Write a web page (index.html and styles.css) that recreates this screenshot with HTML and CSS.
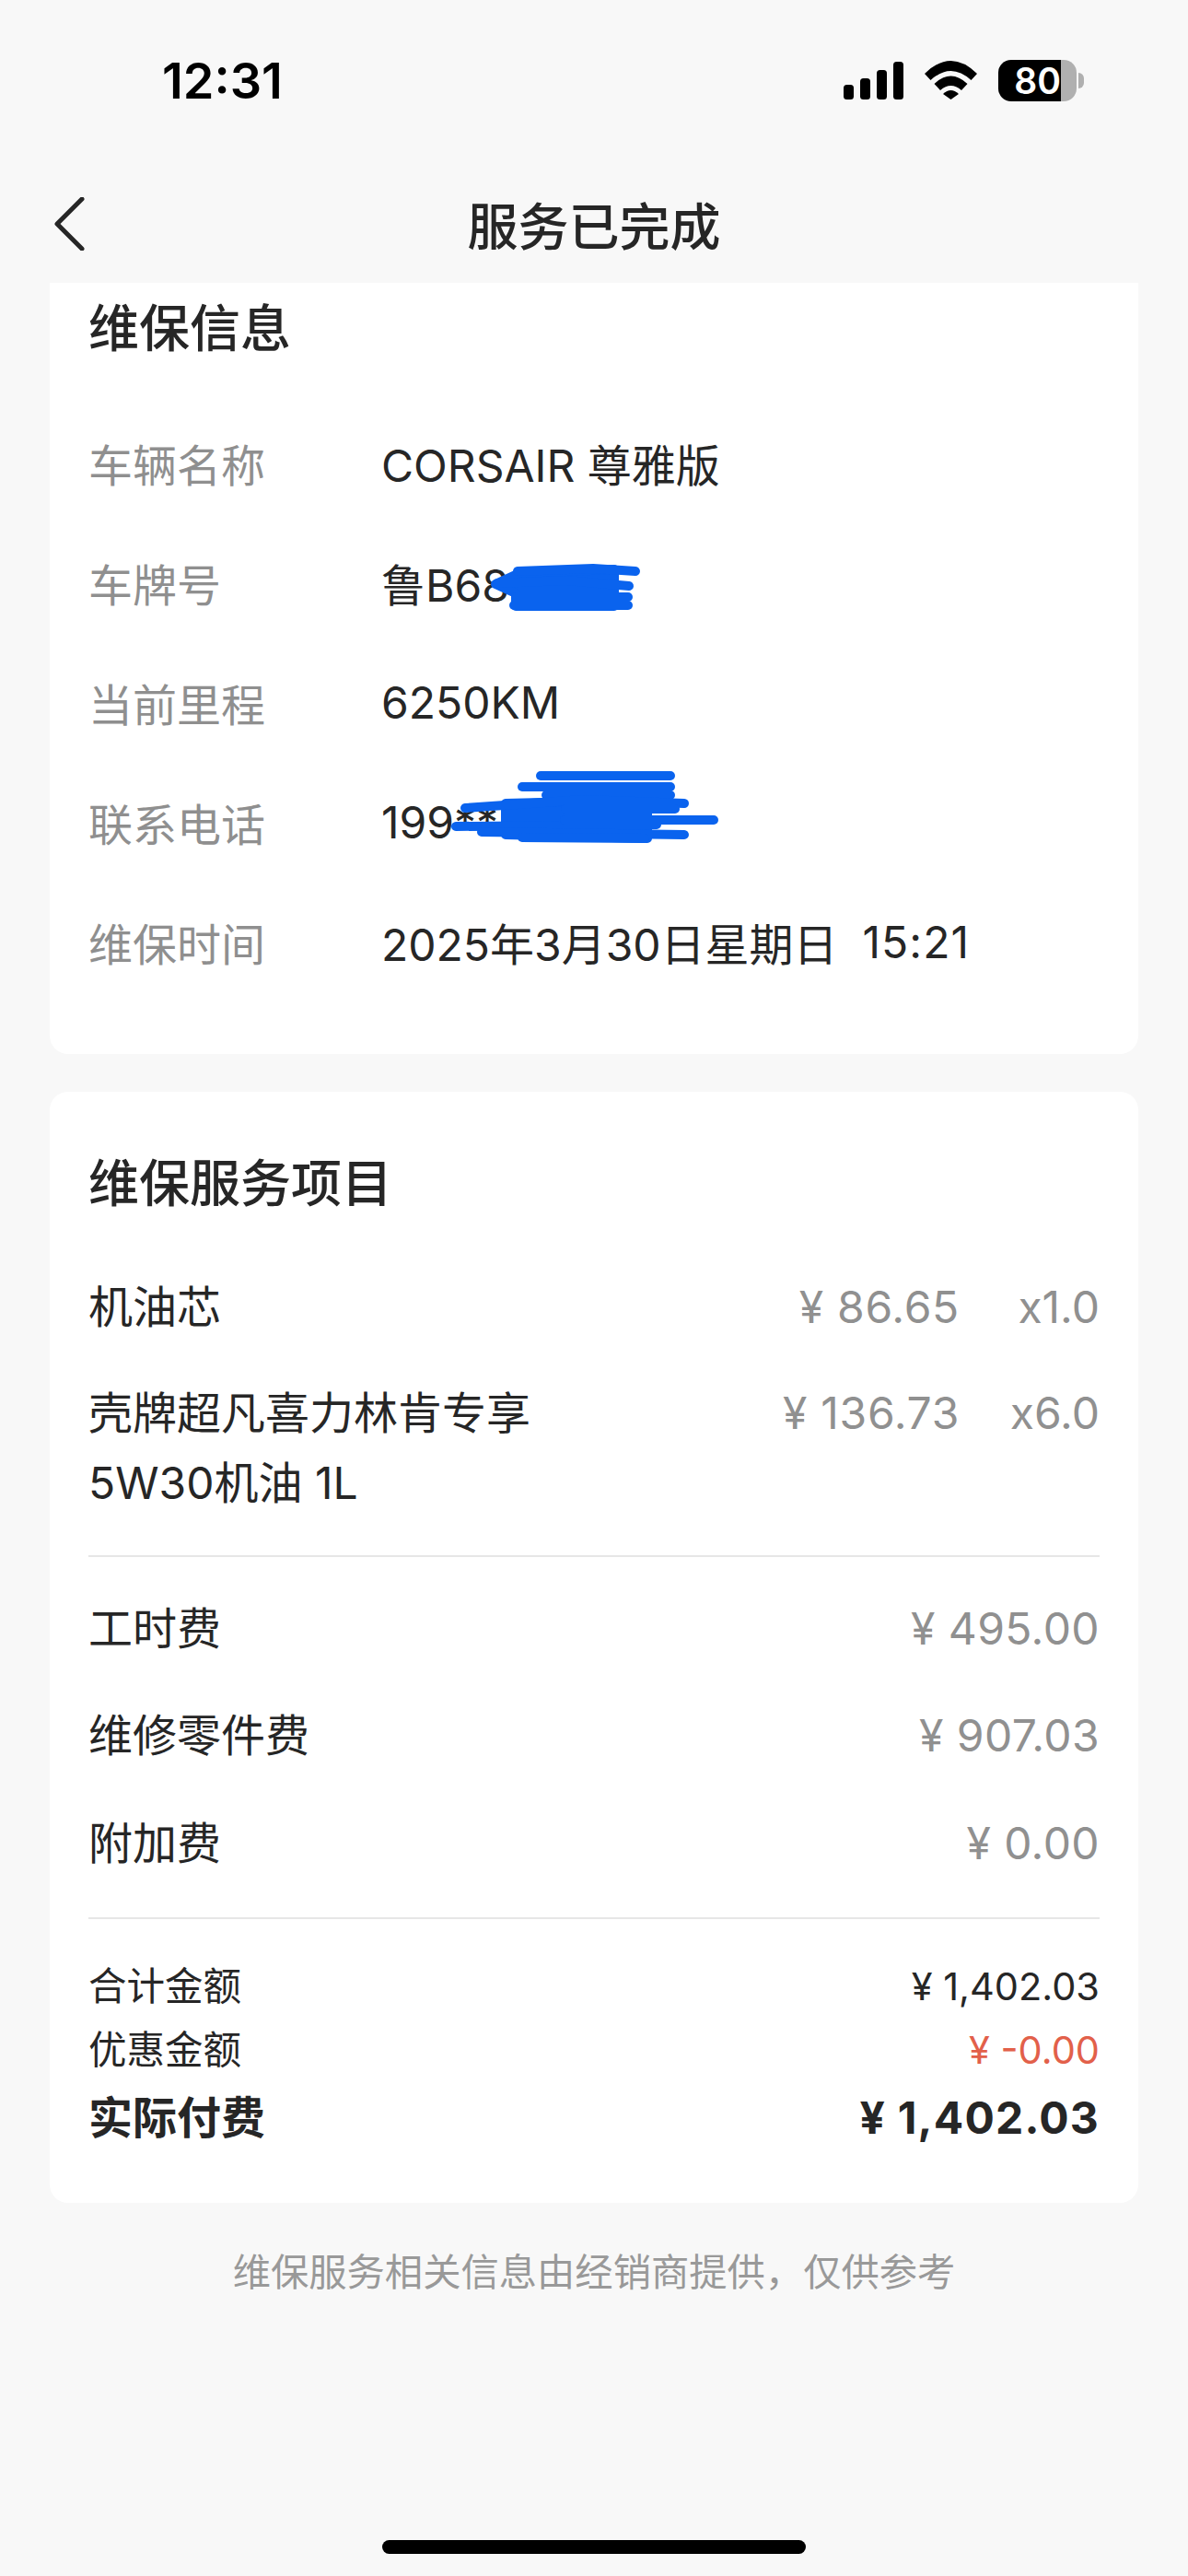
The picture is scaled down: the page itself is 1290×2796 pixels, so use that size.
FILE: index.html
```html
<!DOCTYPE html>
<html lang="zh-CN">
<head>
  <meta charset="UTF-8" />
  <meta name="viewport" content="width=device-width, initial-scale=1.0"/>
  <title>服务已完成</title>
  <link rel="stylesheet" href="styles.css">
</head>
<body>
  <div class="page">
    <div class="status-bar">
      <span class="time">12:31</span>
      <div class="status-icons">
        <svg class="signal" width="65" height="41" viewBox="0 0 65 41">
          <rect x="0" y="25" width="11" height="16" rx="3.5"/>
          <rect x="18" y="18" width="11" height="23" rx="3.5"/>
          <rect x="36" y="9" width="11" height="32" rx="3.5"/>
          <rect x="54" y="0" width="11" height="41" rx="3.5"/>
        </svg>
        <svg class="wifi" width="57" height="42" viewBox="0 0 57 42">
          <path d="M0 14 Q28.5 -14 57 14 L50.5 21 Q28.5 1 6.500 21 Z"/>
          <path d="M10.500 25 Q28.500 8 46.500 25 L40 32 Q28.500 22 17 32 Z"/>
          <path d="M20 36 Q28.500 28 37 36 L28.500 42 Z"/>
        </svg>
        <div class="battery"><span class="battery-num">80</span></div>
      </div>
    </div>

    <div class="nav">
      <svg class="back" width="36" height="58" viewBox="0 0 36 58">
        <path d="M30 2 L3 29 L30 56"/>
      </svg>
      <h1>服务已完成</h1>
    </div>

    <div class="card info-card">
      <h2>维保信息</h2>
      <div class="info-row">
        <span class="info-label">车辆名称</span>
        <span class="info-value">CORSAIR 尊雅版</span>
      </div>
      <div class="info-row">
        <span class="info-label">车牌号</span>
        <span class="info-value">鲁B68
          <svg class="scribble" width="400" height="130" viewBox="0 0 400 130">
            <path class="blot" d="M124 64 L150 52 L253 48 L253 88 L146 88 L146 74 Z"/>
            <path d="M148 50 L230 47 L276 50"/>
            <path d="M126 63 L200 60 L269 66"/>
            <path d="M146 78 L268 78"/>
            <path d="M144 87 L268 87"/>
          </svg>
        </span>
      </div>
      <div class="info-row">
        <span class="info-label">当前里程</span>
        <span class="info-value">6250KM</span>
      </div>
      <div class="info-row">
        <span class="info-label">联系电话</span>
        <span class="info-value">199**
          <svg class="scribble" width="400" height="130" viewBox="0 0 400 130">
            <path class="blot" d="M135 42 L289 38 L289 80 L135 76 Z"/>
            <path d="M173 12 L314 12"/>
            <path d="M153 24 L314 24"/>
            <path d="M179 33 L314 33"/>
            <path d="M91 47 L220 38 L329 42"/>
            <path d="M200 48 L319 48"/>
            <path d="M81 67 L299 65"/>
            <path d="M199 60 L361 60"/>
            <path d="M109 73 L329 76"/>
            <path d="M153 79 L286 80"/>
          </svg>
        </span>
      </div>
      <div class="info-row">
        <span class="info-label">维保时间</span>
        <span class="info-value">2025年3月30日星期日&nbsp;&nbsp;<span class="clock">15:21</span></span>
      </div>
    </div>

    <div class="card service-card">
      <h2>维保服务项目</h2>
      <div class="item-list">
        <div class="item">
          <span class="item-name">机油芯</span>
          <span class="item-price">¥ 86.65</span>
          <span class="item-qty">x1.0</span>
        </div>
        <div class="item">
          <span class="item-name">壳牌超凡喜力林肯专享<br>5W30机油 1L</span>
          <span class="item-price">¥ 136.73</span>
          <span class="item-qty">x6.0</span>
        </div>
      </div>
      <div class="divider"></div>
      <div class="fee-list">
        <div class="fee"><span>工时费</span><span class="fee-value">¥ 495.00</span></div>
        <div class="fee"><span>维修零件费</span><span class="fee-value">¥ 907.03</span></div>
        <div class="fee"><span>附加费</span><span class="fee-value">¥ 0.00</span></div>
      </div>
      <div class="divider"></div>
      <div class="total"><span>合计金额</span><span>¥ 1,402.03</span></div>
      <div class="total"><span>优惠金额</span><span class="discount">¥ -0.00</span></div>
      <div class="total-paid"><span>实际付费</span><span class="paid-value">¥ 1,402.03</span></div>
    </div>

    <p class="footnote">维保服务相关信息由经销商提供，仅供参考</p>
    <div class="home-bar"></div>
  </div>
</body>
</html>
```

FILE: styles.css
```css
* {
  box-sizing: border-box;
  margin: 0;
  padding: 0;
}

body {
  font-family: Inter, "Noto Sans CJK SC", sans-serif;
  background: #f8f8f8;
  color: #262626;
}

.page {
  display: flex;
  flex-direction: column;
  min-height: 100vh;
  padding: 0 54px;
}

.status-bar {
  display: flex;
  align-items: center;
  justify-content: space-between;
  height: 174px;
  margin: 0 -54px;
  padding: 0 113px 0 176px;
  color: #000;
}

.time {
  font-size: 54px;
  font-weight: 600;
}

.status-icons {
  display: flex;
  align-items: center;
  gap: 23px;
}

.signal, .wifi {
  fill: #000;
}

.battery {
  position: relative;
  width: 85px;
  height: 45px;
  margin-right: 8px;
  padding-right: 17px;
  border-radius: 14px;
  background: linear-gradient(90deg, #000 80%, #b0b0b0 80%);
  color: #fff;
  font-size: 39px;
  font-weight: 600;
  line-height: 45px;
  text-align: right;
}

.battery::after {
  content: '';
  position: absolute;
  top: 14px;
  right: -8px;
  width: 6px;
  height: 17px;
  border-radius: 0 6px 6px 0;
  background: #b0b0b0;
}

.nav {
  position: relative;
  display: flex;
  align-items: center;
  justify-content: center;
  height: 133px;
  padding-top: 2px;
}

.nav h1 {
  font-size: 55px;
  font-weight: 500;
}

.back {
  position: absolute;
  left: 5px;
  top: 40px;
  fill: none;
  stroke: #262626;
  stroke-width: 5;
  stroke-linecap: round;
  stroke-linejoin: round;
}

.card {
  border-radius: 0 0 20px 20px;
  background: #fff;
  padding: 11px 42px 57px;
}

.card h2 {
  font-size: 55px;
  font-weight: 500;
  line-height: 76px;
}

.info-card h2 {
  margin-bottom: 43px;
}

.info-row {
  display: flex;
  align-items: center;
  height: 130px;
  font-size: 48px;
}

.info-label {
  width: 318px;
  color: #8f8f8f;
}

.info-value {
  position: relative;
  align-self: stretch;
  display: flex;
  align-items: center;
  white-space: nowrap;
}

.clock {
  letter-spacing: 1px;
}

.scribble {
  position: absolute;
  left: 0;
  top: 3px;
  fill: none;
  stroke: #0a63ee;
  stroke-width: 10;
  stroke-linecap: round;
  stroke-linejoin: round;
  overflow: visible;
}

.scribble .blot {
  fill: #0a63ee;
}

.service-card {
  margin-top: 41px;
  padding: 61px 42px 53px;
  border-radius: 20px;
}

.item-list {
  display: flex;
  flex-direction: column;
  gap: 39px;
  margin-top: 58.500px;
  font-size: 48px;
  line-height: 76px;
}

.item {
  display: flex;
}

.item-name {
  flex: 1;
}

.item-price, .item-qty, .fee-value {
  color: #909090;
}

.item-price {
  letter-spacing: 0.7px;
}

.item-qty {
  width: 152px;
  text-align: right;
}

.fee-value {
  letter-spacing: 0.4px;
}

.divider {
  height: 2px;
  margin-top: 40.500px;
  background: #e6e6e6;
}

.fee-list {
  display: flex;
  flex-direction: column;
  gap: 40.500px;
  margin: 39.500px 0 42.500px;
  font-size: 48px;
  line-height: 76px;
}

.fee, .total, .total-paid {
  display: flex;
  justify-content: space-between;
}

.fee-list + .divider {
  margin-top: 0;
  margin-bottom: 39px;
}

.total {
  font-size: 41.500px;
  line-height: 69px;
}

.discount {
  color: #e2604a;
}

.total-paid {
  font-size: 48px;
  font-weight: 700;
  line-height: 78px;
}

.paid-value {
  letter-spacing: 1.200px;
}

.footnote {
  margin-top: 41px;
  color: #999;
  font-size: 41.300px;
  line-height: 68px;
  text-align: center;
}

.home-bar {
  align-self: center;
  width: 460px;
  height: 15px;
  margin-top: auto;
  margin-bottom: 24px;
  border-radius: 8px;
  background: #000;
}
```
